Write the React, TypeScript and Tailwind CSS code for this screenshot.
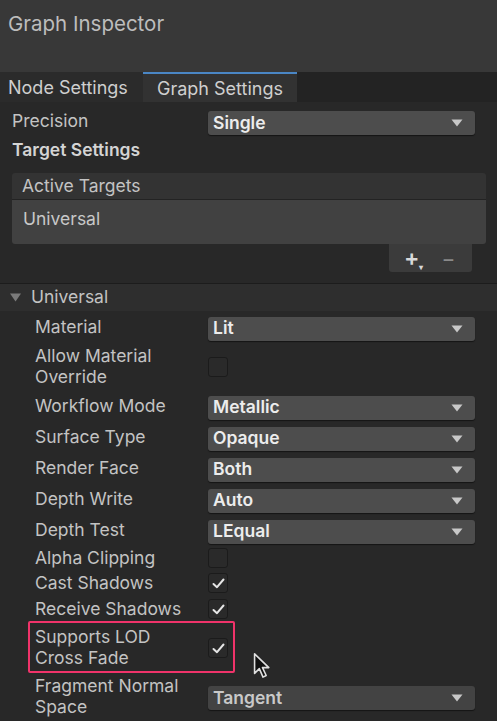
import React from "react";

const font = { fontFamily: "Inter, 'Noto Sans', sans-serif" };

function Caret() {
  return (
    <svg width="12" height="8" viewBox="0 0 12 8" className="shrink-0">
      <path d="M0.5 0.5 L11.5 0.5 L6 7.5 Z" fill="#c8c8c8" />
    </svg>
  );
}

function Dropdown({ value, dim = false }: { value: string; dim?: boolean }) {
  return (
    <div
      className={`flex h-[24px] w-[267px] items-center justify-between rounded-[3px] pl-[5px] pr-[12px] shadow-[0_1px_1px_rgba(0,0,0,0.5)] ${
        dim ? "bg-[#434343]" : "bg-[#4d4d4d]"
      }`}
    >
      <span className={`text-[17.5px] font-semibold ${dim ? "text-[#c9c9c9]" : "text-[#ececec]"}`}>{value}</span>
      <Caret />
    </div>
  );
}

function Check({ on }: { on: boolean }) {
  return (
    <div className="flex h-[20px] w-[20px] -translate-y-[1px] items-center justify-center rounded-[3px] border border-[#1b1b1b] bg-[#2a2a2a]">
      {on && (
        <svg width="13" height="11" viewBox="0 0 13 11">
          <path d="M1.5 6 L5 9.2 L11.5 1.5" stroke="#e6e6e6" strokeWidth="2" fill="none" strokeLinecap="round" strokeLinejoin="round" />
        </svg>
      )}
    </div>
  );
}

function Row({ label, children, h = 31 }: { label: React.ReactNode; children: React.ReactNode; h?: number }) {
  return (
    <div className="flex items-center" style={{ height: h }}>
      <div className="w-[208px] shrink-0 -translate-y-[2px] pl-[35px] text-[17.5px] leading-[21px] text-[#c3c3c3]">{label}</div>
      <div className="flex items-center">{children}</div>
    </div>
  );
}

export default function App() {
  return (
    <div className="relative h-[721px] w-[497px] overflow-hidden bg-[#282828]" style={font}>
      {/* title */}
      <div className="flex h-[72px] items-start bg-[#383838] pl-[8px] pt-[9px]">
        <span className="text-[20.5px] text-[#bdbdbd]">Graph Inspector</span>
      </div>

      {/* tabs */}
      <div className="flex h-[30px] bg-[#232323]">
        <div className="flex w-[143px] items-center bg-[#2b2b2b] pl-[8px] text-[18px] text-[#cfcfcf]">Node Settings</div>
        <div className="flex w-[154px] items-center justify-center border-t-2 border-[#4a86c5] bg-[#323232] text-[18px] text-[#cfcfcf]">
          Graph Settings
        </div>
      </div>

      {/* precision */}
      <div className="mt-[9px] flex h-[24px] items-center">
        <div className="w-[208px] -translate-y-[2px] pl-[12px] text-[17.5px] text-[#c3c3c3]">Precision</div>
        <Dropdown value="Single" />
      </div>
      <div className="mt-[2px] h-[25px] pl-[12px] text-[17.5px] font-semibold leading-[25px] text-[#d4d4d4]">Target Settings</div>

      {/* active targets list */}
      <div className="ml-[12px] mt-[11px] w-[474px]">
        <div className="flex h-[27px] items-center rounded-t-[3px] border-b border-[#232323] bg-[#333333] pl-[10px] text-[17.5px] text-[#c3c3c3]">
          Active Targets
        </div>
        <div className="h-[44px] rounded-b-[3px] bg-[#414141] pl-[11px] pt-[6px] text-[17.5px] text-[#c8c8c8]">Universal</div>
        <div className="flex justify-end pr-[14px]">
          <div className="flex h-[28px] w-[83px] items-center gap-[22px] rounded-b-[3px] bg-[#3b3b3b] pl-[15px]">
            <span className="relative text-[23px] leading-none font-semibold text-[#d8d8d8]">
              +<span className="absolute -bottom-[1px] right-[-4px] text-[8px]">▾</span>
            </span>
            <span className="text-[21px] leading-none text-[#8a8a8a]">−</span>
          </div>
        </div>
      </div>

      {/* foldout */}
      <div className="mt-[11px] flex h-[28px] items-center border-t border-[#1c1c1c] bg-[#2e2e2e] pl-[10px]">
        <svg width="11" height="9" viewBox="0 0 11 9" className="mr-[10px]">
          <path d="M0 0.5 L11 0.5 L5.5 8.5 Z" fill="#7a7a7a" />
        </svg>
        <span className="text-[17.5px] text-[#c3c3c3]">Universal</span>
      </div>

      <div className="pt-[2px]">
        <Row label="Material">
          <Dropdown value="Lit" />
        </Row>
        <Row label={<>Allow Material<br />Override</>} h={48}>
          <Check on={false} />
        </Row>
        <Row label="Workflow Mode">
          <Dropdown value="Metallic" />
        </Row>
        <Row label="Surface Type">
          <Dropdown value="Opaque" />
        </Row>
        <Row label="Render Face">
          <Dropdown value="Both" />
        </Row>
        <Row label="Depth Write">
          <Dropdown value="Auto" />
        </Row>
        <Row label="Depth Test">
          <Dropdown value="LEqual" />
        </Row>
        <Row label="Alpha Clipping" h={24}>
          <Check on={false} />
        </Row>
        <Row label="Cast Shadows" h={26}>
          <Check on />
        </Row>
        <Row label="Receive Shadows" h={26}>
          <Check on />
        </Row>
        <Row label={<>Supports LOD<br />Cross Fade</>} h={52}>
          <Check on />
        </Row>
        <Row label={<>Fragment Normal<br />Space</>} h={46}>
          <Dropdown value="Tangent" dim />
        </Row>
      </div>

      {/* highlight box */}
      <div className="pointer-events-none absolute left-[28px] top-[621px] h-[52px] w-[207px] rounded-[2px] border-[2.5px] border-[#f0336a]" />

      {/* cursor */}
      <svg className="absolute left-[253px] top-[652px]" width="19" height="28" viewBox="0 0 18 26">
        <path d="M1.5 1.5 L1.5 20 L6 15.5 L9.5 23.5 L12.5 22 L9 14.5 L15 14.5 Z" fill="#111" stroke="#e0e0e0" strokeWidth="1.5" strokeLinejoin="round" />
      </svg>
    </div>
  );
}
